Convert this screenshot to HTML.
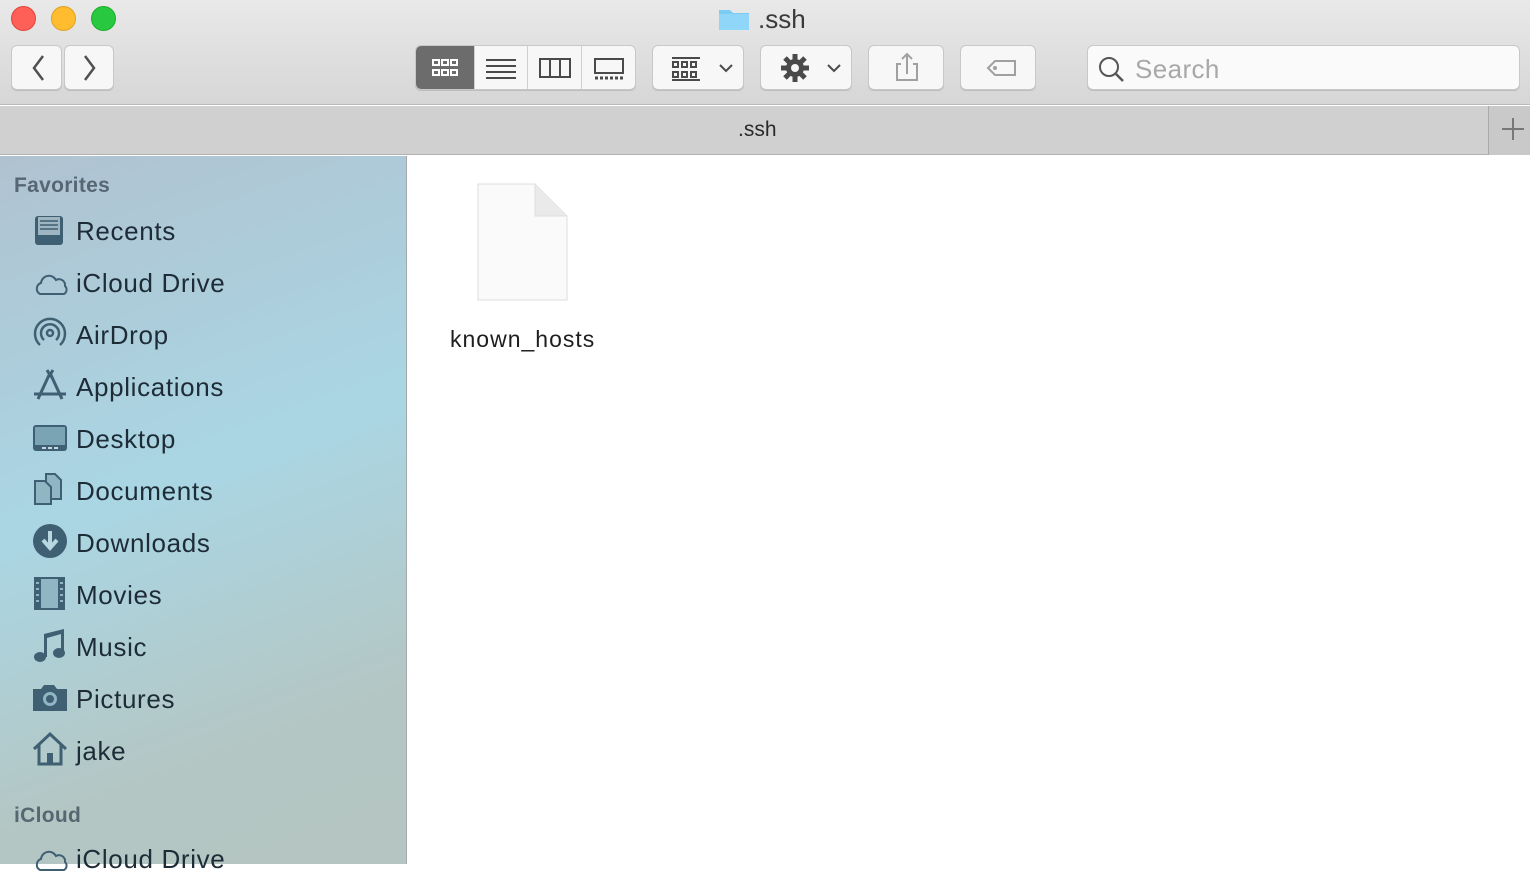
<!DOCTYPE html>
<html><head><style>
*{margin:0;padding:0;box-sizing:border-box}
body{width:1530px;height:864px;overflow:hidden;font-family:"Liberation Sans",sans-serif;background:#fff;position:relative}
.tb{position:absolute;left:0;top:0;width:1530px;height:105px;background:linear-gradient(#e9e9e9,#d6d6d6);border-bottom:1px solid #b9b9b9}
.dot{position:absolute;top:6px;width:25px;height:25px;border-radius:50%}
.btn{position:absolute;top:45px;height:45px;background:#f7f7f7;border:1px solid #c8c8c8;border-radius:6px;box-shadow:0 1px 0 #bdbdbd}
.tabs{position:absolute;left:0;top:106px;width:1530px;height:49px;background:#d0d0d0;border-bottom:1px solid #b1b1b1}
.side{position:absolute;left:0;top:156px;width:407px;height:708px;background:linear-gradient(160deg,#b0c2d0 0%,#aad6e4 45%,#b4c6c3 80%,#b5c5c2 100%);border-right:1px solid #a3a9ad}
.side .h{position:absolute;left:14px;font-size:21px;color:#475763;font-weight:bold;opacity:.85;letter-spacing:0.3px}
.it{position:absolute;left:76px;font-size:26px;color:#1d2c36;letter-spacing:0.65px}
.ic{position:absolute;left:32px}
</style></head><body>
<div class="tb">
<div class="dot" style="left:11px;background:#fe5f57;border:1px solid #e1443e"></div>
<div class="dot" style="left:51px;background:#febc2e;border:1px solid #dea123"></div>
<div class="dot" style="left:91px;background:#28c840;border:1px solid #1dad2b"></div>
<svg style="position:absolute;left:718px;top:7px" width="32" height="24"><path d="M1 3h11l3 3h16v17H1z" fill="#7ccbf3"/><path d="M1 7h30v16H1z" fill="#8fd6f8"/></svg>
<div style="position:absolute;left:758px;top:4px;font-size:26px;color:#3a3a3a">.ssh</div>
<div class="btn" style="left:11px;width:51px"><svg width="51" height="45"><path d="M31 10 L22 22 L31 34" stroke="#505050" stroke-width="2.5" fill="none"/></svg></div>
<div class="btn" style="left:64px;width:50px"><svg width="50" height="45"><path d="M20 10 L29 22 L20 34" stroke="#505050" stroke-width="2.5" fill="none"/></svg></div>
<div class="btn" style="left:415px;width:221px;overflow:hidden">
<div style="position:absolute;left:0;top:0;width:58px;height:45px;background:#6c6c6c"></div>
<div style="position:absolute;left:111px;top:0;width:1px;height:45px;background:#d0d0d0"></div>
<div style="position:absolute;left:58px;top:0;width:1px;height:45px;background:#d0d0d0"></div>
<div style="position:absolute;left:165px;top:0;width:1px;height:45px;background:#d0d0d0"></div>
<svg width="221" height="45" style="position:absolute;left:0;top:0">
<g fill="none" stroke="#fff" stroke-width="2"><rect x="17" y="14" width="6" height="5"/><rect x="26" y="14" width="6" height="5"/><rect x="35" y="14" width="6" height="5"/><rect x="17" y="24" width="6" height="5"/><rect x="26" y="24" width="6" height="5"/><rect x="35" y="24" width="6" height="5"/></g>
<g stroke="#4a4a4a" stroke-width="2"><path d="M70 14h30M70 20h30M70 26h30M70 32h30"/></g>
<g fill="none" stroke="#4a4a4a" stroke-width="2"><rect x="124" y="13" width="30" height="18"/><path d="M134 13v18M144 13v18"/><rect x="179" y="13" width="28" height="14"/></g>
<path d="M179 32h28" stroke="#4a4a4a" stroke-width="3" stroke-dasharray="3 2"/>
</svg></div>
<div class="btn" style="left:652px;width:92px"><svg width="92" height="45"><g fill="none" stroke="#4a4a4a" stroke-width="2"><path d="M19 12h28M19 34h28"/><rect x="20" y="16" width="5" height="5"/><rect x="29" y="16" width="5" height="5"/><rect x="38" y="16" width="5" height="5"/><rect x="20" y="26" width="5" height="5"/><rect x="29" y="26" width="5" height="5"/><rect x="38" y="26" width="5" height="5"/><path d="M67 19l6 6 6-6"/></g></svg></div>
<div class="btn" style="left:760px;width:92px"><svg width="92" height="45"><g transform="translate(34,22)"><circle r="9" fill="#4a4a4a"/><g stroke="#4a4a4a" stroke-width="5"><path d="M0-14V14M-14 0H14M-10-10L10 10M-10 10L10-10"/></g><circle r="4" fill="#f7f7f7"/></g><path d="M67 19l6 6 6-6" fill="none" stroke="#4a4a4a" stroke-width="2"/></svg></div>
<div class="btn" style="left:868px;width:76px"><svg width="76" height="45"><g fill="none" stroke="#a0a0a0" stroke-width="2"><path d="M32 18h-4v16h20V18h-4"/><path d="M38 28V8M33 13l5-5 5 5"/></g></svg></div>
<div class="btn" style="left:960px;width:76px"><svg width="76" height="45"><path d="M27 22l7-7h20v14H34z" fill="none" stroke="#a0a0a0" stroke-width="2"/><circle cx="34" cy="22" r="2" fill="#a0a0a0"/></svg></div>
<div class="btn" style="left:1087px;width:433px;background:#fafafa"><svg width="40" height="45"><circle cx="21" cy="21" r="9" fill="none" stroke="#555" stroke-width="2"/><path d="M28 28l7 7" stroke="#555" stroke-width="2.5"/></svg><div style="position:absolute;left:47px;top:8px;font-size:26px;color:#a8a8a8;letter-spacing:0.4px">Search</div></div>
</div>
<div class="tabs"><div style="position:absolute;left:738px;top:12px;font-size:21px;color:#2a2a2a">.ssh</div>
<div style="position:absolute;left:1488px;top:0;width:42px;height:49px;border-left:1px solid #a9a9a9;background:#c9c9c9"><svg width="42" height="49"><path d="M24 12v22M13 23h22" stroke="#777" stroke-width="2"/></svg></div></div>
<div class="side">
<div class="h" style="top:18px">Favorites</div>
<svg class="ic" style="top:57px" width="36" height="36"><rect x="3" y="3" width="28" height="29" rx="3" fill="#3f5f73"/><rect x="6" y="4" width="22" height="18" fill="#9fb6c2"/><path d="M8 8h18M8 12h18M8 16h18" stroke="#3f5f73" stroke-width="1.5"/></svg>
<div class="it" style="top:60px">Recents</div>
<svg class="ic" style="top:110px" width="36" height="36"><path d="M8 28a6 6 0 0 1 1-11 8 8 0 0 1 15-3 6 6 0 0 1 9 6 5 5 0 0 1-1 8z" fill="none" stroke="#3f5f73" stroke-width="2"/></svg>
<div class="it" style="top:112px">iCloud Drive</div>
<svg class="ic" style="top:159px" width="36" height="36"><g fill="none" stroke="#3f5f73" stroke-width="2.5"><path d="M8 30a15 15 0 1 1 20 0"/><path d="M12 25a9 9 0 1 1 12 0"/><circle cx="18" cy="18" r="3"/></g></svg>
<div class="it" style="top:164px">AirDrop</div>
<svg class="ic" style="top:211px" width="36" height="36"><g stroke="#3f5f73" stroke-width="3" fill="none"><path d="M18 6L6 32M18 6l12 26M2 27h32M15 3l3 5 3-5"/></g></svg>
<div class="it" style="top:216px">Applications</div>
<svg class="ic" style="top:265px" width="36" height="36"><rect x="1" y="4" width="34" height="26" rx="3" fill="#3f5f73"/><rect x="3" y="6" width="30" height="18" fill="#7aa3b3"/><path d="M10 27h4M16 27h4M22 27h4" stroke="#c6d7dd" stroke-width="2"/></svg>
<div class="it" style="top:268px">Desktop</div>
<svg class="ic" style="top:315px" width="36" height="36"><g fill="#8fb6c2" stroke="#3f5f73" stroke-width="2"><path d="M14 3h9l6 6v19H14z"/><path d="M3 10h10l6 6v17H3z"/></g></svg>
<div class="it" style="top:320px">Documents</div>
<svg class="ic" style="top:367px" width="36" height="36"><circle cx="18" cy="18" r="17" fill="#3f5f73"/><path d="M18 8v16M11 17l7 8 7-8" stroke="#b8d6df" stroke-width="4" fill="none"/></svg>
<div class="it" style="top:372px">Downloads</div>
<svg class="ic" style="top:419px" width="36" height="36"><rect x="2" y="2" width="31" height="33" fill="#3f5f73"/><rect x="9" y="4" width="17" height="29" fill="#8fb6c2"/><path d="M4 8h3M4 14h3M4 20h3M4 26h3M28 8h3M28 14h3M28 20h3M28 26h3" stroke="#8fb6c2" stroke-width="2"/></svg>
<div class="it" style="top:424px">Movies</div>
<svg class="ic" style="top:471px" width="36" height="36"><g fill="#3f5f73"><ellipse cx="8" cy="30" rx="6" ry="5"/><ellipse cx="27" cy="26" rx="6" ry="5"/><path d="M12 30V7l20-5v24h-3V7L15 11v19z"/></g></svg>
<div class="it" style="top:476px">Music</div>
<svg class="ic" style="top:525px" width="36" height="36"><path d="M1 8h8l3-4h10l3 4h10v22H1z" fill="#3f5f73"/><circle cx="18" cy="18" r="8" fill="#8fb6c2" stroke="#3f5f73" stroke-width="2"/><circle cx="18" cy="18" r="4" fill="#3f5f73"/></svg>
<div class="it" style="top:528px">Pictures</div>
<svg class="ic" style="top:575px" width="36" height="36"><path d="M2 18L18 3l16 15M7 14v19h22V14" fill="none" stroke="#3f5f73" stroke-width="3"/><rect x="15" y="22" width="6" height="11" fill="#3f5f73"/></svg>
<div class="it" style="top:580px">jake</div>
<div class="h" style="top:648px">iCloud</div>
<svg class="ic" style="top:686px" width="36" height="36"><path d="M8 28a6 6 0 0 1 1-11 8 8 0 0 1 15-3 6 6 0 0 1 9 6 5 5 0 0 1-1 8z" fill="none" stroke="#3f5f73" stroke-width="2"/></svg>
<div class="it" style="top:688px">iCloud Drive</div>
</div>
<svg style="position:absolute;left:476px;top:182px" width="96" height="124"><path d="M2 2h57l32 32v84H2z" fill="#fafafa" stroke="#dedede" stroke-width="1"/><path d="M59 2v32h32" fill="#eaeaea" stroke="#dedede"/></svg>
<div style="position:absolute;left:450px;top:326px;font-size:23px;color:#1e1e1e;letter-spacing:1px">known_hosts</div>
</body></html>
